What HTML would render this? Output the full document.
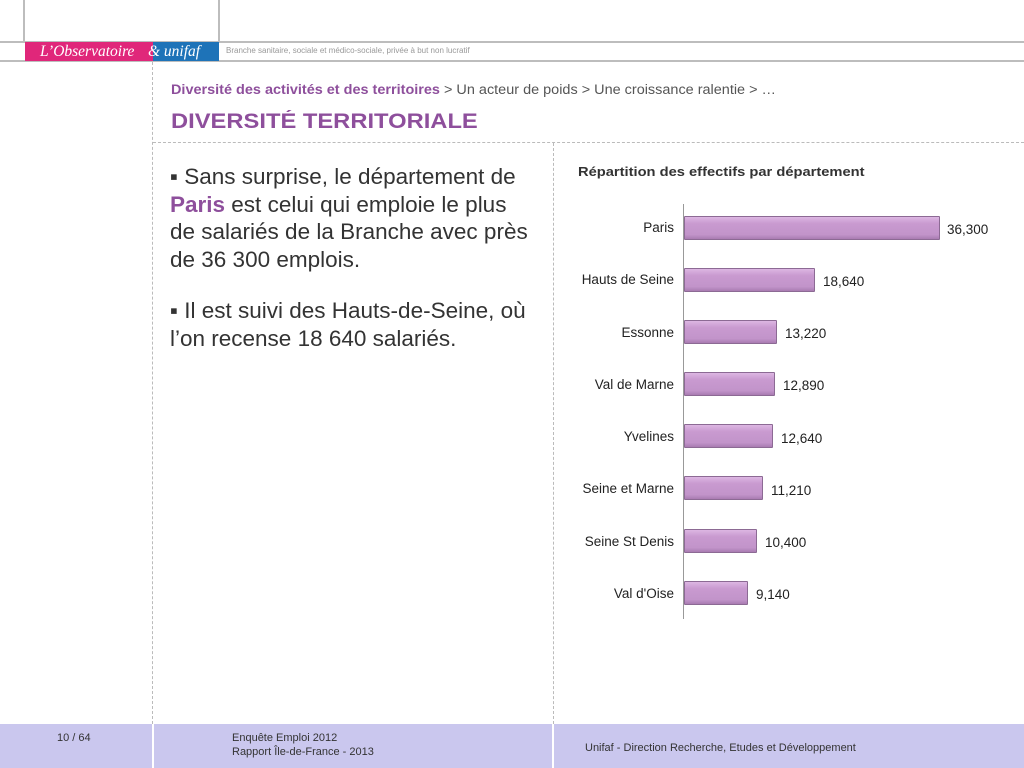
<!DOCTYPE html>
<html><head><meta charset="utf-8"><style>
*{margin:0;padding:0;box-sizing:border-box}
body{width:1024px;height:768px;position:relative;background:#fff;font-family:"Liberation Sans",sans-serif;overflow:hidden;color:#333}
.a{position:absolute}
.lbl{position:absolute;font-size:13.5px;color:#222;text-align:right;width:150px;left:524px}
.bar{position:absolute;left:684px;height:24px;background:linear-gradient(#dcb6e2,#c99ad0 30%,#c294ca 80%,#a97cb2);border:1px solid #8c6a94;border-radius:1px}
.val{position:absolute;font-size:13.5px;color:#222}
.sx{transform-origin:left top;white-space:nowrap}
</style></head><body>
<div class="a" style="left:0;top:41px;width:1024px;height:2px;background:#bdbdbd"></div>
<div class="a" style="left:0;top:60px;width:1024px;height:2px;background:#bdbdbd"></div>
<div class="a" style="left:23px;top:0;width:2px;height:42px;background:#bdbdbd"></div>
<div class="a" style="left:218px;top:0;width:2px;height:42px;background:#bdbdbd"></div>
<div class="a" style="left:25px;top:42px;width:128px;height:19px;background:#e0277a"></div>
<div class="a" style="left:153px;top:42px;width:66px;height:19px;background:#1e73b8"></div>
<div class="a" style="left:40px;top:42px;color:#fff;font-family:'Liberation Serif',serif;font-style:italic;font-size:15.5px;line-height:19px">L’Observatoire</div>
<div class="a" style="left:148px;top:42px;color:#fff;font-family:'Liberation Serif',serif;font-style:italic;font-size:15.5px;line-height:19px">&amp; unifaf</div>
<div class="a" style="left:226px;top:46px;color:#999;font-size:8px">Branche sanitaire, sociale et médico-sociale, privée à but non lucratif</div>
<div class="a" style="left:152px;top:62px;height:662px;border-left:1px dashed #bbb"></div>
<div class="a" style="left:553px;top:143px;height:581px;border-left:1px dashed #bbb"></div>
<div class="a" style="left:153px;top:142px;width:871px;border-top:1px dashed #bbb"></div>
<div class="a sx" style="left:171px;top:82px;font-size:13.5px;color:#555;transform:scaleX(1.07)"><b style="color:#8e4f9c;display:inline-block">Diversité des activités et des territoires</b> &gt; Un acteur de poids &gt; Une croissance ralentie &gt; …</div>
<div class="a sx" style="left:171px;top:110px;font-size:21px;font-weight:bold;color:#8e4f9c;transform:scaleX(1.13)">DIVERSITÉ TERRITORIALE</div>
<div class="a sx" style="left:170px;top:163px;font-size:22.5px;line-height:27.5px;color:#333">
<div>▪ Sans surprise, le département de<br><b style="color:#8e4f9c">Paris</b> est celui qui emploie le plus<br>de salariés de la Branche avec près<br>de 36 300 emplois.</div>
<div style="margin-top:24px">▪ Il est suivi des Hauts-de-Seine, où<br>l’on recense 18 640 salariés.</div>
</div>
<div class="a sx" style="left:578px;top:164px;font-size:13px;font-weight:bold;color:#333;transform:scaleX(1.13)">Répartition des effectifs par département</div>
<div class="a" style="left:683px;top:204px;width:1px;height:415px;background:#999"></div>
<div class="lbl" style="top:220px">Paris</div><div class="bar" style="top:216px;width:256px"></div><div class="val" style="left:947px;top:222px">36,300</div>
<div class="lbl" style="top:272px">Hauts de Seine</div><div class="bar" style="top:268px;width:131px"></div><div class="val" style="left:823px;top:274px">18,640</div>
<div class="lbl" style="top:325px">Essonne</div><div class="bar" style="top:320px;width:93px"></div><div class="val" style="left:785px;top:326px">13,220</div>
<div class="lbl" style="top:377px">Val de Marne</div><div class="bar" style="top:372px;width:91px"></div><div class="val" style="left:783px;top:378px">12,890</div>
<div class="lbl" style="top:429px">Yvelines</div><div class="bar" style="top:424px;width:89px"></div><div class="val" style="left:781px;top:431px">12,640</div>
<div class="lbl" style="top:481px">Seine et Marne</div><div class="bar" style="top:476px;width:79px"></div><div class="val" style="left:771px;top:483px">11,210</div>
<div class="lbl" style="top:534px">Seine St Denis</div><div class="bar" style="top:529px;width:73px"></div><div class="val" style="left:765px;top:535px">10,400</div>
<div class="lbl" style="top:586px">Val d'Oise</div><div class="bar" style="top:581px;width:64px"></div><div class="val" style="left:756px;top:587px">9,140</div>
<div class="a" style="left:0;top:724px;width:1024px;height:44px;background:#cac7ee"></div>
<div class="a" style="left:152px;top:724px;width:2px;height:44px;background:#fff"></div>
<div class="a" style="left:552px;top:724px;width:2px;height:44px;background:#fff"></div>
<div class="a" style="left:57px;top:732px;font-size:11px;color:#333">10 / 64</div>
<div class="a" style="left:232px;top:731px;font-size:11px;line-height:14px;color:#333">Enquête Emploi 2012<br>Rapport Île-de-France - 2013</div>
<div class="a" style="left:585px;top:742px;font-size:11px;color:#333">Unifaf - Direction Recherche, Etudes et Développement</div>
</body></html>
